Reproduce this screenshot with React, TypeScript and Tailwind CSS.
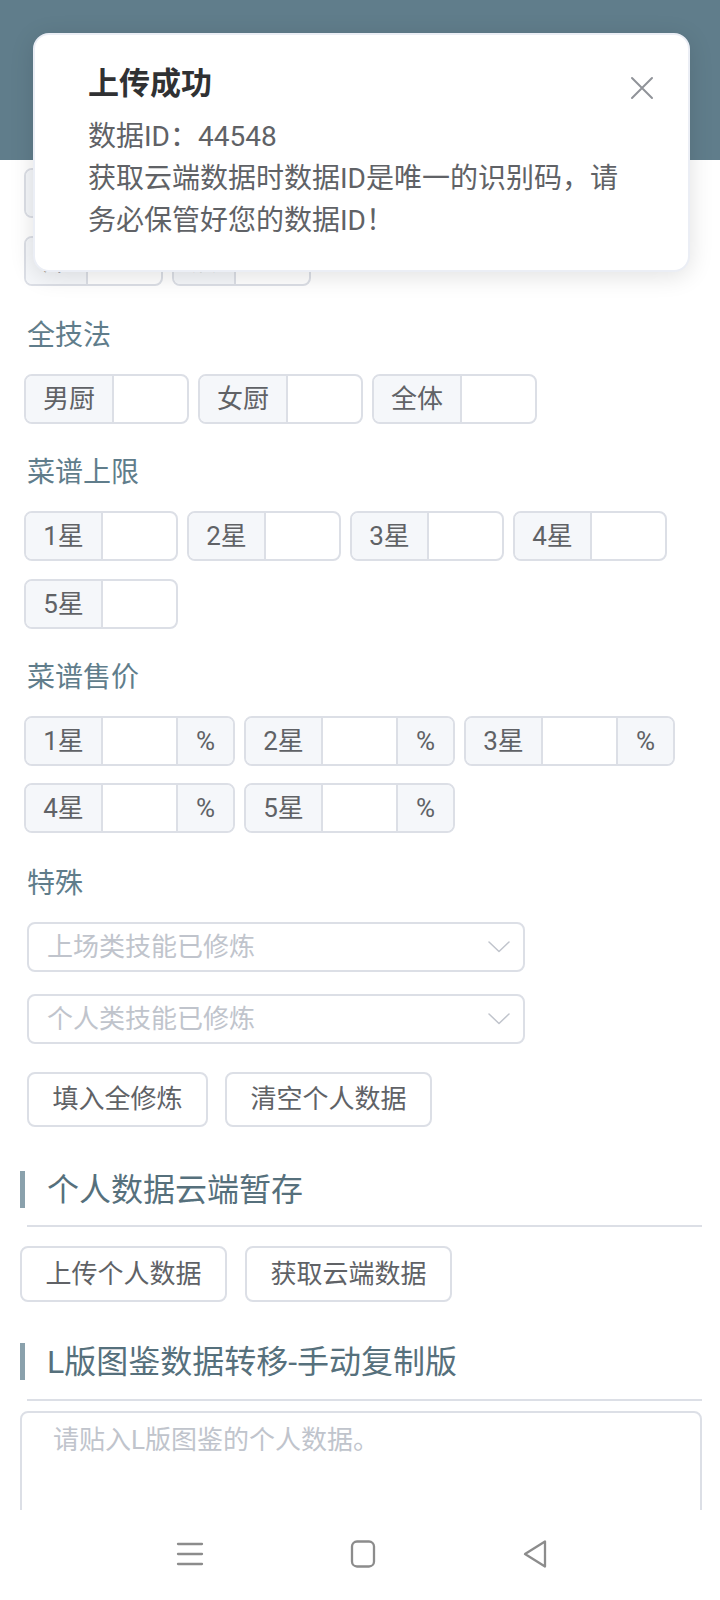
import React from "react";

// input group: [label | blank input | optional suffix]
const Group = ({ label, addonW, suffix }: { label: string; addonW: string; suffix?: string }) => (
  <div className="flex h-[50px] overflow-hidden rounded-[8px] border-2 border-[#dcdfe6] bg-white">
    <span
      className={`flex items-center justify-center border-r-2 border-[#dcdfe6] bg-[#f5f7fa] text-[26px] text-[#606266] ${addonW}`}
    >
      {label}
    </span>
    <span className="w-[73px]" />
    {suffix && (
      <span className="flex w-[57px] items-center justify-center border-l-2 border-[#dcdfe6] bg-[#f5f7fa] text-[26px] text-[#606266]">
        {suffix}
      </span>
    )}
  </div>
);

const Label = ({ children, mt = "mt-[29px]" }: { children: React.ReactNode; mt?: string }) => (
  <div className={`mb-[18px] pl-[3px] text-[28px] leading-[40px] text-[#607d8b] ${mt}`}>{children}</div>
);

const Chevron = () => (
  <svg width="24" height="14" viewBox="0 0 24 14" fill="none">
    <path d="M2 2 L12 11.5 L22 2" stroke="#c0c4cc" strokeWidth="1.5" strokeLinecap="round" strokeLinejoin="round" />
  </svg>
);

const Select = ({ placeholder }: { placeholder: string }) => (
  <div className="ml-[3px] flex h-[50px] w-[498px] items-center justify-between rounded-[8px] border-2 border-[#dcdfe6] pl-[18px] pr-[12px]">
    <span className="text-[26px] text-[#c0c4cc]">{placeholder}</span>
    <Chevron />
  </div>
);

const Btn = ({ children, w }: { children: React.ReactNode; w: string }) => (
  <button className={`flex items-center justify-center rounded-[8px] border-2 border-[#dcdfe6] bg-white text-[26px] text-[#606266] ${w}`}>
    {children}
  </button>
);

const Heading = ({ children }: { children: React.ReactNode }) => (
  <div className="flex h-[37px] items-center border-l-[5px] border-[#8aa1ac] pl-[22px] text-[32px] text-[#56707c]">
    {children}
  </div>
);

export default function App() {
  const techs = ["炒", "烤", "蒸", "切", "炸", "煮"];
  const stars = ["1星", "2星", "3星", "4星", "5星"];

  return (
    <div className="relative flex h-[1600px] w-[720px] flex-col overflow-hidden bg-white font-['Roboto','Noto_Sans_CJK_SC',sans-serif]">
      <div className="flex-1 overflow-hidden">
        <div className="h-[160px] bg-[#607d8b]" />

        <div className="pl-[20px] pr-[18px] pt-[8px]">
          <div className="pl-[4px]">
            <div className="flex flex-wrap gap-x-[9px] gap-y-[18px]">
              {techs.map((t) => (
                <Group key={t} label={t} addonW="w-[62px]" />
              ))}
            </div>

            <Label mt="mt-[30px]">全技法</Label>
            <div className="flex flex-wrap gap-x-[9px] gap-y-[18px]">
              <Group label="男厨" addonW="w-[88px]" />
              <Group label="女厨" addonW="w-[88px]" />
              <Group label="全体" addonW="w-[88px]" />
            </div>

            <Label>菜谱上限</Label>
            <div className="flex flex-wrap gap-x-[9px] gap-y-[18px]">
              {stars.map((s) => (
                <Group key={s} label={s} addonW="w-[77px]" />
              ))}
            </div>

            <Label>菜谱售价</Label>
            <div className="flex flex-wrap gap-x-[9px] gap-y-[17px]">
              {stars.map((s) => (
                <Group key={s} label={s} addonW="w-[77px]" suffix="%" />
              ))}
            </div>

            <Label mt="mt-[31px]">特殊</Label>
            <div className="flex flex-col gap-[22px]">
              <Select placeholder="上场类技能已修炼" />
              <Select placeholder="个人类技能已修炼" />
            </div>
            <div className="ml-[3px] mt-[28px] flex gap-[17px]">
              <Btn w="w-[181px] h-[55px]">填入全修炼</Btn>
              <Btn w="w-[207px] h-[55px]">清空个人数据</Btn>
            </div>
          </div>

          <div className="mt-[44px]">
            <Heading>个人数据云端暂存</Heading>
            <div className="ml-[7px] mt-[17px] h-[2px] bg-[#dcdfe6]" />
            <div className="mt-[19px] flex gap-[18px]">
              <Btn w="w-[207px] h-[56px]">上传个人数据</Btn>
              <Btn w="w-[207px] h-[56px]">获取云端数据</Btn>
            </div>
          </div>

          <div className="mt-[41px]">
            <Heading>L版图鉴数据转移-手动复制版</Heading>
            <div className="ml-[7px] mt-[19px] h-[2px] bg-[#dcdfe6]" />
            <div className="mt-[10px] h-[180px] rounded-[8px] border-2 border-[#dcdfe6] px-[31px] py-[8px] text-[26px] leading-[39px] text-[#c0c4cc]">
              请贴入L版图鉴的个人数据。
            </div>
          </div>
        </div>
      </div>

      {/* system nav bar */}
      <div className="flex h-[90px] items-center justify-center gap-[143px] bg-white pb-[2px] pl-[6px]">
        <svg width="30" height="26" viewBox="0 0 30 26">
          <path d="M3 3 H27 M3 13 H27 M3 23 H27" stroke="#8c8c8c" strokeWidth="2.3" strokeLinecap="round" />
        </svg>
        <svg width="30" height="30" viewBox="0 0 30 30">
          <rect x="4" y="2.5" width="22" height="25" rx="5" fill="none" stroke="#8c8c8c" strokeWidth="2.3" />
        </svg>
        <svg width="30" height="30" viewBox="0 0 30 30">
          <path d="M24 2.5 V27.5 L4 15 Z" fill="none" stroke="#8c8c8c" strokeWidth="2.3" strokeLinejoin="round" />
        </svg>
      </div>

      {/* notification */}
      <div className="absolute left-[33px] top-[33px] w-[657px] rounded-[16px] border-2 border-[#ebeef5] bg-white pb-[28px] pl-[53px] pr-[60px] pt-[25px] shadow-[0_4px_24px_rgba(0,0,0,0.12)]">
        <div className="text-[31px] font-semibold leading-[48px] text-[#303133]">上传成功</div>
        <div className="mt-[8px] text-[28px] leading-[42px] text-[#606266]">
          <p>数据ID：44548</p>
          <p>获取云端数据时数据ID是唯一的识别码，请务必保管好您的数据ID！</p>
        </div>
        <svg className="absolute right-[34px] top-[41px]" width="24" height="24" viewBox="0 0 24 24">
          <path d="M2 2 L22 22 M22 2 L2 22" stroke="#909399" strokeWidth="2" strokeLinecap="round" />
        </svg>
      </div>
    </div>
  );
}
